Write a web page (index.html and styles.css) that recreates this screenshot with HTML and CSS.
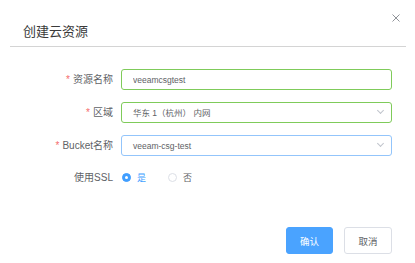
FILE: index.html
```html
<!DOCTYPE html>
<html lang="zh-CN">
<head>
    <meta charset="UTF-8">
    <meta name="viewport" content="width=device-width, initial-scale=1.0">
    <title>创建云资源</title>
    <link rel="stylesheet" href="styles.css">
</head>
<body>
    <div class="dialog">
        <div class="dialog-header">
            <span class="dialog-title">创建云资源</span>
            <button class="dialog-close" type="button" aria-label="关闭">
                <svg width="8" height="8" viewBox="0 0 8 8">
                    <path d="M0.5 0.5 L7.5 7.5 M7.5 0.5 L0.5 7.5" stroke="#909399" stroke-width="1" fill="none"/>
                </svg>
            </button>
        </div>

        <form class="form">
            <div class="form-item">
                <label class="form-label required">资源名称</label>
                <div class="form-control">
                    <input class="input is-success" type="text" value="veeamcsgtest">
                </div>
            </div>

            <div class="form-item">
                <label class="form-label required">区域</label>
                <div class="form-control">
                    <div class="select input is-success">
                        <span class="select-value">华东 1（杭州） 内网</span>
                        <span class="select-arrow"></span>
                    </div>
                </div>
            </div>

            <div class="form-item">
                <label class="form-label required">Bucket名称</label>
                <div class="form-control">
                    <div class="select input is-focus">
                        <span class="select-value">veeam-csg-test</span>
                        <span class="select-arrow"></span>
                    </div>
                </div>
            </div>

            <div class="form-item form-item-radio">
                <label class="form-label">使用SSL</label>
                <div class="form-control radio-group">
                    <label class="radio is-checked">
                        <span class="radio-inner"></span>
                        <span class="radio-label">是</span>
                    </label>
                    <label class="radio">
                        <span class="radio-inner"></span>
                        <span class="radio-label">否</span>
                    </label>
                </div>
            </div>
        </form>

        <div class="dialog-footer">
            <button class="btn btn-primary" type="button">确认</button>
            <button class="btn" type="button">取消</button>
        </div>
    </div>
</body>
</html>
```

FILE: styles.css
```css
* {
    margin: 0;
    padding: 0;
    box-sizing: border-box;
}

body {
    font-family: 'Liberation Sans', 'Noto Sans CJK SC', sans-serif;
    background: #ffffff;
    color: #606266;
    width: 415px;
    height: 263px;
    overflow: hidden;
}

.dialog {
    position: relative;
    width: 415px;
}

.dialog-header {
    margin: 0 9px 0 10px;
    padding: 24px 13px 6px;
    border-bottom: 1px solid #d4d4d4;
}

.dialog-title {
    display: block;
    font-size: 13px;
    line-height: 16px;
    color: #3a3a3a;
}

.dialog-close {
    position: absolute;
    top: 14px;
    right: 15px;
    width: 8px;
    height: 8px;
    border: none;
    background: none;
    display: flex;
}

.form {
    padding: 22px 23px 0 23px;
    display: flex;
    flex-direction: column;
    gap: 12px;
}

.form-item {
    display: flex;
    align-items: center;
    height: 21px;
}

.form-item-radio {
    height: 19px;
}

.form-label {
    width: 98px;
    padding-right: 8px;
    text-align: right;
    font-size: 10px;
    line-height: 14px;
    color: #606266;
}

.form-label.required::before {
    content: '*';
    color: #f56c6c;
    margin-right: 3px;
}

.form-control {
    flex: 1;
}

.input {
    display: flex;
    align-items: center;
    width: 100%;
    height: 21px;
    padding: 0 11px;
    border: 1px solid #dcdfe6;
    border-radius: 3px;
    background: #fff;
    font-family: inherit;
    font-size: 8.5px;
    color: #606266;
    outline: none;
}

.input.is-success {
    border-color: #7fcb5a;
}

.input.is-focus {
    border-color: #93c5fb;
}

.select {
    justify-content: space-between;
    padding-right: 8px;
}

.select-value {
    line-height: 12px;
}

.select-arrow {
    width: 5px;
    height: 5px;
    border-right: 1px solid #c0c4cc;
    border-bottom: 1px solid #c0c4cc;
    transform: translateY(-2px) rotate(45deg);
}

.radio-group {
    display: flex;
    align-items: center;
    gap: 22px;
    padding-left: 1px;
}

.radio {
    display: flex;
    align-items: center;
    gap: 6px;
    font-size: 9px;
    color: #606266;
}

.radio-inner {
    width: 9px;
    height: 9px;
    border-radius: 50%;
    border: 1px solid #dcdfe6;
    background: #fff;
    position: relative;
}

.radio.is-checked .radio-inner {
    background: #409eff;
    border-color: #409eff;
}

.radio.is-checked .radio-inner::after {
    content: '';
    position: absolute;
    top: 2px;
    left: 2px;
    width: 3px;
    height: 3px;
    border-radius: 50%;
    background: #fff;
}

.radio.is-checked .radio-label {
    color: #409eff;
}

.dialog-footer {
    display: flex;
    justify-content: flex-end;
    gap: 11px;
    padding: 40px 23px 0;
}

.btn {
    width: 48px;
    height: 27px;
    border: 1px solid #dcdfe6;
    border-radius: 3px;
    background: #fff;
    color: #606266;
    font-family: inherit;
    font-size: 9.5px;
}

.btn-primary {
    width: 47px;
    background: #4aa3ff;
    border-color: #4aa3ff;
    color: #fff;
}
```
